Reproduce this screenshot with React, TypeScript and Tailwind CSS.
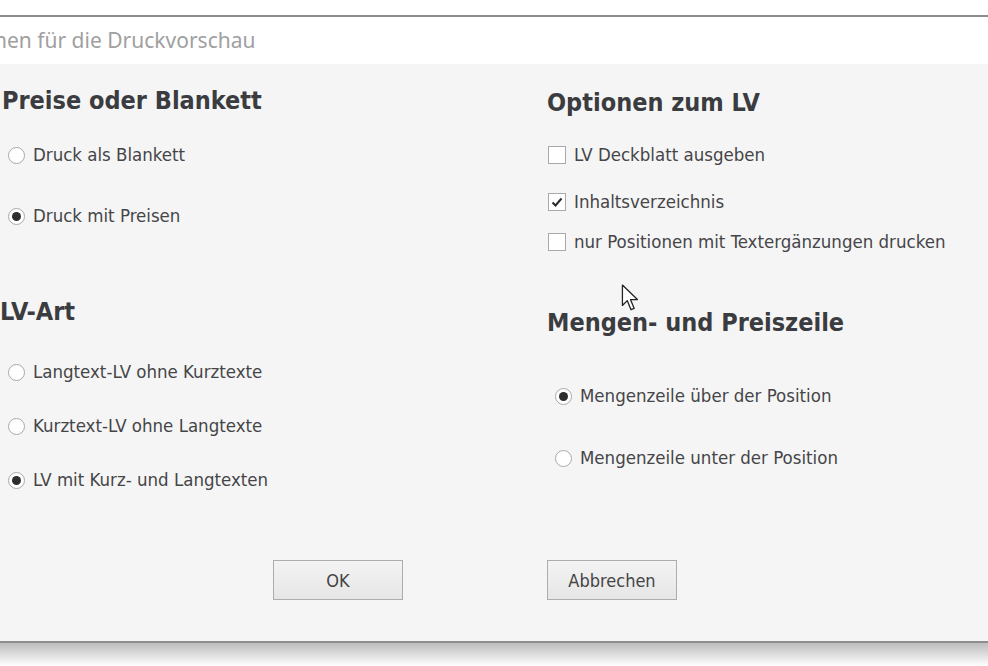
import React from 'react';

const bodyFont = { fontFamily: '"DejaVu Sans Condensed", "DejaVu Sans", sans-serif' };

const Radio = ({ checked, label, indent }: { checked?: boolean; label: string; indent: string }) => (
    <div className={`flex items-center h-6 ${indent}`}>
        <span className="w-[17px] h-[17px] rounded-full border border-[#a9a9a9] bg-white flex items-center justify-center shrink-0">
            {checked && <span className="w-[9px] h-[9px] rounded-full bg-[#2e2e2e]" />}
        </span>
        <span className="ml-2 text-[18.5px] text-[#454548] leading-none whitespace-nowrap" style={bodyFont}>{label}</span>
    </div>
);

const Check = ({ checked, label }: { checked?: boolean; label: string }) => (
    <div className="flex items-center h-6 ml-px">
        <span className="w-[18px] h-[18px] border border-[#a9a9a9] bg-white flex items-center justify-center shrink-0">
            {checked && (
                <svg width="14" height="14" viewBox="0 0 14 14">
                    <path d="M2.5 7.5 L5.5 10.5 L11.5 3.5" fill="none" stroke="#2a2a2a" strokeWidth="2" />
                </svg>
            )}
        </span>
        <span className="ml-2 text-[18.5px] text-[#454548] leading-none whitespace-nowrap" style={bodyFont}>{label}</span>
    </div>
);

const Heading = ({ children, className }: { children: React.ReactNode; className: string }) => (
    <div className={`h-7 flex items-center text-[25px] font-bold text-[#3a3c40] leading-none whitespace-nowrap ${className}`} style={bodyFont}>
        {children}
    </div>
);

const Button = ({ label, className }: { label: string; className?: string }) => (
    <button className={`w-[130px] h-10 border border-[#adadad] bg-gradient-to-b from-[#f3f3f3] to-[#e6e6e6] text-[18px] text-[#444] ${className ?? ''}`} style={bodyFont}>
        {label}
    </button>
);

export default function App() {
    return (
        <div className="w-[988px] h-[666px] bg-white overflow-hidden relative flex flex-col">
            <div className="h-[15px] bg-white" />
            <div className="h-[2px] bg-[#8c8c8c]" />
            <div className="h-[47px] bg-white overflow-hidden flex items-center">
                <span className="ml-[-61px] whitespace-nowrap text-[21px] text-[#a0a0a0]" style={{ fontFamily: '"Noto Sans", "Open Sans", sans-serif' }}>
                    Optionen für die Druckvorschau
                </span>
            </div>
            <div className="h-[577px] bg-[#f5f5f5] flex flex-col">
                <div className="grid grid-cols-[547px_1fr] h-[496px]">
                    <div className="flex flex-col">
                        <Heading className="mt-[22px] ml-[2px]">Preise oder Blankett</Heading>
                        <div className="mt-[29px]"><Radio indent="ml-2" label="Druck als Blankett" /></div>
                        <div className="mt-[37px]"><Radio indent="ml-2" checked label="Druck mit Preisen" /></div>
                        <Heading className="mt-[69px]">LV-Art</Heading>
                        <div className="mt-[35px]"><Radio indent="ml-2" label="Langtext-LV ohne Kurztexte" /></div>
                        <div className="mt-[30px]"><Radio indent="ml-2" label="Kurztext-LV ohne Langtexte" /></div>
                        <div className="mt-[30px]"><Radio indent="ml-2" checked label="LV mit Kurz- und Langtexten" /></div>
                    </div>
                    <div className="flex flex-col">
                        <Heading className="mt-[24px]">Optionen zum LV</Heading>
                        <div className="mt-[27px]"><Check label="LV Deckblatt ausgeben" /></div>
                        <div className="mt-[23px]"><Check checked label="Inhaltsverzeichnis" /></div>
                        <div className="mt-[16px]"><Check label="nur Positionen mit Textergänzungen drucken" /></div>
                        <Heading className="mt-[54px]">Mengen- und Preiszeile</Heading>
                        <div className="mt-[48px]"><Radio indent="ml-2" checked label="Mengenzeile über der Position" /></div>
                        <div className="mt-[38px]"><Radio indent="ml-2" label="Mengenzeile unter der Position" /></div>
                    </div>
                </div>
                <div className="grid grid-cols-[547px_1fr]">
                    <div><Button label="OK" className="ml-[273px]" /></div>
                    <div><Button label="Abbrechen" /></div>
                </div>
            </div>
            <div className="h-[2px] bg-[#8e8e8e]" />
            <div className="flex-1 bg-gradient-to-b from-[#bdbdbd] to-white" />

            <svg className="absolute left-[621px] top-[284px]" width="20" height="30" viewBox="0 0 18 28">
                <path d="M1 1 L1 20 L5.5 15.5 L9 24 L12 22.8 L8.5 14.5 L15 14.5 Z" fill="white" stroke="#222" strokeWidth="1.2" strokeLinejoin="round" />
            </svg>
        </div>
    );
}
